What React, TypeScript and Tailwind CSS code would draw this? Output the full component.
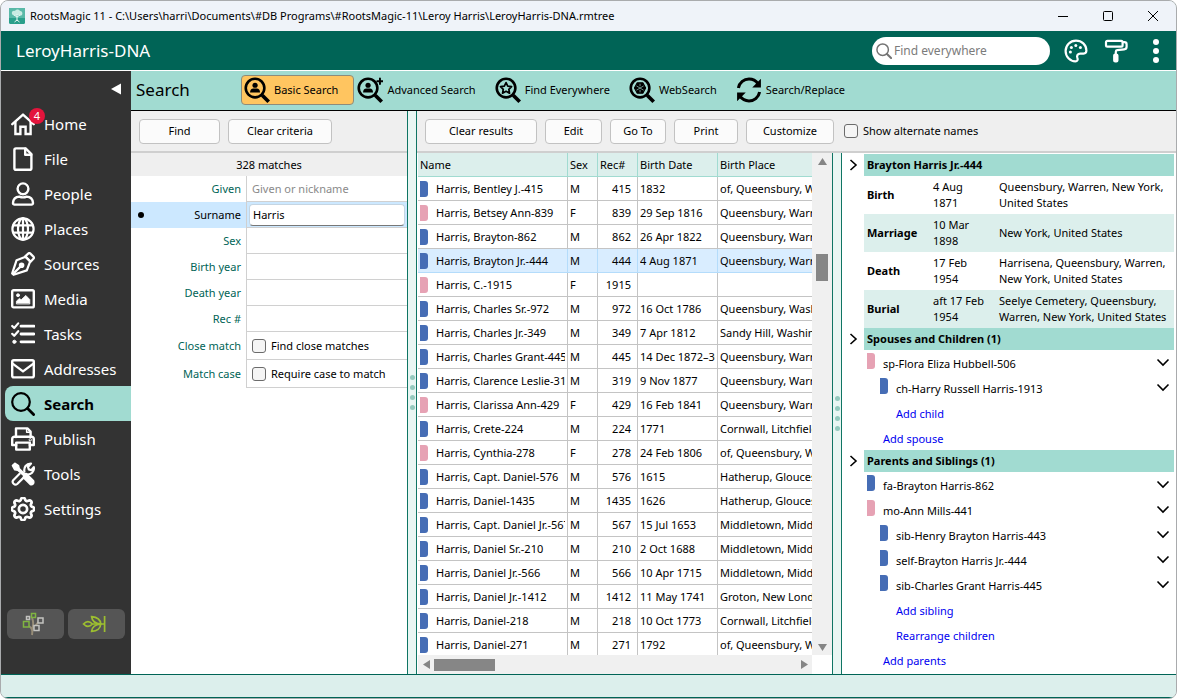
import { useState } from 'react';
import type { ReactNode } from 'react';
import { clsx } from 'clsx';
import { BsGear } from 'react-icons/bs';

type Sex = 'M' | 'F';

interface Person {
  name: string;
  sex: Sex;
  rec: number;
  date: string;
  place: string;
}

const people: Person[] = [
  { name: 'Harris, Bentley J.-415', sex: 'M', rec: 415, date: '1832', place: 'of, Queensbury, Warren' },
  { name: 'Harris, Betsey Ann-839', sex: 'F', rec: 839, date: '29 Sep 1816', place: 'Queensbury, Warren' },
  { name: 'Harris, Brayton-862', sex: 'M', rec: 862, date: '26 Apr 1822', place: 'Queensbury, Warren' },
  { name: 'Harris, Brayton Jr.-444', sex: 'M', rec: 444, date: '4 Aug 1871', place: 'Queensbury, Warren' },
  { name: 'Harris, C.-1915', sex: 'F', rec: 1915, date: '', place: '' },
  { name: 'Harris, Charles Sr.-972', sex: 'M', rec: 972, date: '16 Oct 1786', place: 'Queensbury, Washington' },
  { name: 'Harris, Charles Jr.-349', sex: 'M', rec: 349, date: '7 Apr 1812', place: 'Sandy Hill, Washington' },
  { name: 'Harris, Charles Grant-445', sex: 'M', rec: 445, date: '14 Dec 1872–30', place: 'Queensbury, Warren' },
  { name: 'Harris, Clarence Leslie-319', sex: 'M', rec: 319, date: '9 Nov 1877', place: 'Queensbury, Warren' },
  { name: 'Harris, Clarissa Ann-429', sex: 'F', rec: 429, date: '16 Feb 1841', place: 'Queensbury, Warren' },
  { name: 'Harris, Crete-224', sex: 'M', rec: 224, date: '1771', place: 'Cornwall, Litchfield' },
  { name: 'Harris, Cynthia-278', sex: 'F', rec: 278, date: '24 Feb 1806', place: 'of, Queensbury, Warren' },
  { name: 'Harris, Capt. Daniel-576', sex: 'M', rec: 576, date: '1615', place: 'Hatherup, Gloucester' },
  { name: 'Harris, Daniel-1435', sex: 'M', rec: 1435, date: '1626', place: 'Hatherup, Gloucester' },
  { name: 'Harris, Capt. Daniel Jr.-567', sex: 'M', rec: 567, date: '15 Jul 1653', place: 'Middletown, Middlesex' },
  { name: 'Harris, Daniel Sr.-210', sex: 'M', rec: 210, date: '2 Oct 1688', place: 'Middletown, Middlesex' },
  { name: 'Harris, Daniel Jr.-566', sex: 'M', rec: 566, date: '10 Apr 1715', place: 'Middletown, Middlesex' },
  { name: 'Harris, Daniel Jr.-1412', sex: 'M', rec: 1412, date: '11 May 1741', place: 'Groton, New London' },
  { name: 'Harris, Daniel-218', sex: 'M', rec: 218, date: '10 Oct 1773', place: 'Cornwall, Litchfield' },
  { name: 'Harris, Daniel-271', sex: 'M', rec: 271, date: '1792', place: 'of, Queensbury, Warren' },
];

const facts = [
  { label: 'Birth', date: '4 Aug 1871', place: 'Queensbury, Warren, New York, United States' },
  { label: 'Marriage', date: '10 Mar 1898', place: 'New York, United States' },
  { label: 'Death', date: '17 Feb 1954', place: 'Harrisena, Queensbury, Warren, New York, United States' },
  { label: 'Burial', date: 'aft 17 Feb 1954', place: 'Seelye Cemetery, Queensbury, Warren, New York, United States' },
];

function Icon({ children, className = 'size-6', width = 2.2 }: { children: ReactNode; className?: string; width?: number }) {
  return (
    <svg
      className={clsx('shrink-0', className)}
      viewBox="0 0 24 24"
      fill="none"
      stroke="currentColor"
      strokeWidth={width}
      strokeLinecap="round"
      strokeLinejoin="round"
      aria-hidden="true"
    >
      {children}
    </svg>
  );
}

const navItems: { label: string; icon: ReactNode; badge?: number }[] = [
  {
    label: 'Home',
    badge: 4,
    icon: (
      <Icon width={2.4}>
        <path d="M1.3 12.2L12 2.6l10.7 9.6" />
        <path d="M4.4 10v12h5v-7.2h5.2V22h5V10" strokeLinejoin="miter" />
      </Icon>
    ),
  },
  {
    label: 'File',
    icon: (
      <Icon width={2.4}>
        <path d="M5 1.4h9.6l5.8 5.8v14a1.6 1.6 0 0 1-1.6 1.6H5a1.6 1.6 0 0 1-1.6-1.6V3A1.6 1.6 0 0 1 5 1.4z" />
        <path d="M14.2 1.8v6h6" />
      </Icon>
    ),
  },
  {
    label: 'People',
    icon: (
      <Icon width={2.4}>
        <circle cx="12" cy="6.8" r="5.4" />
        <path d="M8.4 14.6c2.2 1 5 1 7.2 0 3.6.2 6.200 2.600 6.400 6.400a1.500 1.500 0 0 1-1.600 1.600H3.600A1.500 1.500 0 0 1 2 21c.2-3.800 2.800-6.200 6.400-6.400z" />
      </Icon>
    ),
  },
  {
    label: 'Places',
    icon: (
      <Icon>
        <circle cx="12" cy="12" r="10.6" />
        <ellipse cx="12" cy="12" rx="5" ry="10.6" />
        <path d="M2.4 8.4h19.2M2.4 15.6h19.2M12 1.4v21.2" />
      </Icon>
    ),
  },
  {
    label: 'Sources',
    icon: (
      <Icon>
        <path d="M14.6 4.8L5.6 8.2 1.2 21.4l1.4 1.4 13.2-4.4 3.4-9z" />
        <path d="M14.2 4.4l3-2.8a1.6 1.6 0 0 1 2.2 0l3 3a1.6 1.6 0 0 1 0 2.2l-2.8 3z" />
        <path d="M2.4 21.6l7-7" />
        <circle cx="10.6" cy="13.2" r="1.7" fill="currentColor" />
      </Icon>
    ),
  },
  {
    label: 'Media',
    icon: (
      <Icon width={2.4}>
        <rect x="1.2" y="3.2" width="21.6" height="17.2" rx="1.4" />
        <path d="M5.4 16.6v-2.4l3-2.8 1.8 1.4 4.6-4.4 4 4.2v4z" fill="currentColor" strokeWidth="0.8" />
        <circle cx="7" cy="8.2" r="1.5" fill="currentColor" strokeWidth="0.8" />
      </Icon>
    ),
  },
  {
    label: 'Tasks',
    icon: (
      <Icon>
        <path d="M10 4.2h13M10 12h13M10 19.800h13" strokeWidth="2.8" />
        <path d="M1.200 4l2 2 4-4.600M1.200 11.800l2 2 4-4.600" strokeWidth="2.2" />
        <circle cx="3.4" cy="19.8" r="1.6" fill="currentColor" strokeWidth="1" />
      </Icon>
    ),
  },
  {
    label: 'Addresses',
    icon: (
      <Icon width={2.4}>
        <rect x="1.2" y="3.2" width="21.6" height="17.2" rx="1.6" />
        <path d="M1.6 6.6L12 14.4l10.4-7.8" />
      </Icon>
    ),
  },
  {
    label: 'Search',
    icon: (
      <Icon>
        <circle cx="10" cy="10" r="8.8" />
        <path d="M16.6 16.6l6 6" strokeWidth="2.8" />
      </Icon>
    ),
  },
  {
    label: 'Publish',
    icon: (
      <Icon width={2.4}>
        <path d="M5 10V1.4h11.4L19.6 4.6V10" />
        <path d="M5.2 18H1.2v-6a2.2 2.2 0 0 1 2.2-2.2h17.2a2.2 2.2 0 0 1 2.2 2.2v6h-4" />
        <path d="M5.2 15.6h13.6v7H5.2z" />
        <circle cx="19.2" cy="12.8" r="0.4" />
        <path d="M15.6 1.8v3.4h3.6" strokeWidth="1.4" />
      </Icon>
    ),
  },
  {
    label: 'Tools',
    icon: (
      <Icon>
        <path d="M13.4 9.6c-.8-4 1.8-8.2 6.6-8l-3 3.4.8 2.4 2.4.8 2.600-3c.8 4.600-3 7.800-7 7.200L6.200 22c-2.400 2-5.800-1.200-4-3.800l6.400-6.400" />
        <path
          d="M1.4 3.6l2.4-2.4 3.8 2.4.6 2.8 5.4 5.4 1.8-.4 7.2 7.400c1 3-1 4.600-3.400 3.800l-6.800-6.800.2-2.200L7 8.400l-3.400-.6z"
          fill="currentColor"
          strokeWidth="1.4"
        />
      </Icon>
    ),
  },
  {
    label: 'Settings',
    icon: <BsGear className="size-6 shrink-0" strokeWidth={0.8} aria-hidden="true" />,
  },
];

// magnifier frame shared by the search mode buttons
function Magnifier({ children }: { children?: ReactNode }) {
  return (
    <Icon className="size-[26px]" width={2.4}>
      <circle cx="10.2" cy="10.2" r="8.6" />
      <path d="M16.8 16.800l6 6" strokeWidth="3.4" strokeLinecap="butt" />
      {children}
    </Icon>
  );
}

const modes = [
  {
    label: 'Basic Search',
    icon: (
      <Magnifier>
        <circle cx="10.2" cy="7.6" r="2.4" fill="currentColor" stroke="none" />
        <path d="M5.6 14.2c0-2.4 1.2-3.6 3-3.6h3.2c1.8 0 3 1.2 3 3.6z" fill="currentColor" stroke="none" />
      </Magnifier>
    ),
  },
  {
    label: 'Advanced Search',
    icon: (
      <Magnifier>
        <circle cx="10.2" cy="7.6" r="2.4" fill="currentColor" stroke="none" />
        <path d="M5.6 14.2c0-2.4 1.2-3.6 3-3.6h3.2c1.8 0 3 1.2 3 3.6z" fill="currentColor" stroke="none" />
        <path d="M21.2 1.4v5M18.700 3.900h5" strokeWidth="1.8" />
      </Magnifier>
    ),
  },
  {
    label: 'Find Everywhere',
    icon: (
      <Magnifier>
        <path d="M10.2 5.2l1.6 3.2 3.500.5-2.500 2.500.6 3.500-3.200-1.700L7 14.900l.6-3.500-2.500-2.500 3.500-.5z" strokeWidth="1.6" />
      </Magnifier>
    ),
  },
  {
    label: 'WebSearch',
    icon: (
      <Magnifier>
        <path
          d="M7.6 5.400h5.200l2.600 4.800-2.600 4.800H7.600L5 10.200z"
          fill="currentColor"
          strokeWidth="1"
        />
        <path d="M7.200 8.400l6 3.600M13.200 8.400l-6 3.600M10.200 6.600v1.600M10.200 12.200v1.600" stroke="#a1dbd1" strokeWidth="0.6" />
      </Magnifier>
    ),
  },
  {
    label: 'Search/Replace',
    icon: (
      <Icon className="size-[26px]" width={2.8}>
        <path d="M2.2 10.2C3.2 5 7.4 1.9 12 1.9c3.6 0 6.4 1.600 8.400 4.400" strokeLinecap="butt" />
        <path d="M21.8 13.8c-1 5.2-5.2 8.3-9.8 8.3-3.6 0-6.400-1.600-8.400-4.400" strokeLinecap="butt" />
        <path d="M23 1.6v8h-8zM1 22.4v-8h8z" fill="currentColor" stroke="none" />
      </Icon>
    ),
  },
];

function Swatch({ sex }: { sex: Sex }) {
  return <span className={clsx('block h-4 w-2 shrink-0 rounded-r-[3px]', sex === 'M' ? 'bg-[#466db5]' : 'bg-[#e6a2b4]')} />;
}

function PushButton({ children, className }: { children: ReactNode; className?: string }) {
  return (
    <button type="button" className={clsx('h-[25px] shrink-0 rounded border border-[#c2c2c2] bg-[#fbfbfb] text-center', className)}>
      {children}
    </button>
  );
}

function Splitter() {
  return (
    <div role="separator" className="flex w-[10px] shrink-0 flex-col items-center justify-center gap-[5px] border-x border-[#0f7564] bg-[#e9f6f3]">
      {[0, 1, 2, 3].map((i) => (
        <span key={i} className="size-[5px] rounded-full bg-[#94c9be]" />
      ))}
    </div>
  );
}

function TitleBar() {
  return (
    <header className="flex h-[30px] shrink-0 items-center bg-[#eff3f9] pl-2">
      <svg className="size-4" viewBox="0 0 16 16" aria-hidden="true">
        <rect width="16" height="16" rx="1.5" fill="#2a9f8b" />
        <path d="M0 0h16v10H0z" fill="#59b9a8" />
        <path d="M3 6c-1-3 2-4 3-3 1-2 4-2 5 0 2 0 3 2 2 4-1 1-3 1-4 0-2 1-5 1-6-1z" fill="#c9ebe3" />
        <path d="M8 6v7M8 9L5 7M8 9l3-2M5.5 14L8 12l2.500 2" stroke="#e9f8f4" fill="none" />
      </svg>
      <h1 className="ml-[5px] flex-1 truncate">
        RootsMagic 11 - C:\Users\harri\Documents\#DB Programs\#RootsMagic-11\Leroy Harris\LeroyHarris-DNA.rmtree
      </h1>
      <div className="flex h-full">
        <button type="button" aria-label="Minimize" className="grid w-[45px] place-items-center">
          <svg width="12" height="12"><path d="M1 6.5h10" stroke="#000" /></svg>
        </button>
        <button type="button" aria-label="Maximize" className="grid w-[45px] place-items-center">
          <svg width="12" height="12"><rect x="1.5" y="1.5" width="9" height="9" rx="1" fill="none" stroke="#000" /></svg>
        </button>
        <button type="button" aria-label="Close" className="grid w-[46px] place-items-center">
          <svg width="12" height="12"><path d="M1 1l10 10M11 1L1 11" stroke="#000" /></svg>
        </button>
      </div>
    </header>
  );
}

function FileBar() {
  return (
    <div className="flex h-10 shrink-0 items-center border-b border-white bg-[#006456] pl-[15px] text-white">
      <h2 className="flex-1 text-[17px]">LeroyHarris-DNA</h2>
      <label className="flex h-7 w-[178px] items-center gap-[2px] rounded-full bg-white pl-1 text-[#737373]">
        <Icon className="size-4" width={2.2}>
          <circle cx="10" cy="10" r="8.6" />
          <path d="M16.4 16.4l6.2 6.2" strokeWidth="3" />
        </Icon>
        <input
          type="search"
          aria-label="Find everywhere"
          placeholder="Find everywhere"
          className="min-w-0 flex-1 bg-transparent text-xs text-black outline-none placeholder:text-[#7b7b7b]"
        />
      </label>
      <button type="button" aria-label="Theme" className="ml-[14px]">
        <Icon>
          <path d="M12 1.6C6 1.600 1.600 6.400 1.600 12S6 22.400 11.400 22.400c2 0 2.800-1.800 2-3.400-1-2.400.4-4.400 2.800-4.400h3.400c1.800 0 2.800-1.200 2.800-3C22.400 5.600 17.600 1.600 12 1.600z" />
          <g fill="currentColor" stroke="none">
            <circle cx="6.4" cy="13" r="1.5" />
            <circle cx="7.4" cy="8.6" r="1.5" />
            <circle cx="11.8" cy="6.4" r="1.5" />
            <circle cx="16.4" cy="8.6" r="1.5" />
          </g>
        </Icon>
      </button>
      <button type="button" aria-label="Format" className="ml-4">
        <Icon>
          <rect x="2" y="1.8" width="16.6" height="5.8" rx="1.4" />
          <path d="M18.8 3.2h1.6a2.200 2.200 0 0 1 2.200 2.200v2.400a2.600 2.600 0 0 1-2.400 2.600l-7 .8c-1 .1-1.400.8-1.400 1.600V15" />
          <rect x="10.2" y="15.6" width="3.2" height="6.8" rx="1" fill="currentColor" />
        </Icon>
      </button>
      <button type="button" aria-label="More options" className="mr-2 ml-4">
        <svg className="size-6" viewBox="0 0 24 24" fill="currentColor" aria-hidden="true">
          <circle cx="12" cy="3" r="3" />
          <circle cx="12" cy="12" r="3" />
          <circle cx="12" cy="21" r="3" />
        </svg>
      </button>
    </div>
  );
}

function Sidebar() {
  return (
    <nav className="flex w-[130px] shrink-0 flex-col bg-[#333333] text-[15px] text-white">
      <div className="flex h-[35px] items-center justify-end pr-[10px]">
        <button type="button" aria-label="Collapse">
          <svg width="10" height="12" viewBox="0 0 10 12"><path d="M10 0.5v11L0 6z" fill="#fff" /></svg>
        </button>
      </div>
      {navItems.map(({ label, icon, badge }) => (
        <a
          key={label}
          href={`#${label.toLowerCase()}`}
          className={clsx(
            'relative ml-1 flex h-[35px] items-center gap-[9px] pl-[6px]',
            label === 'Search' && 'rounded-l-lg bg-[#a1dbd1] font-bold text-black',
          )}
        >
          {icon}
          {badge && (
            <span className="absolute top-[2px] left-6 grid size-4 place-items-center rounded-full bg-[#e3143c] text-[11px]">
              {badge}
            </span>
          )}
          {label}
        </a>
      ))}
      <div className="mt-auto mb-[35px] flex gap-1 px-[6px]">
        <button type="button" aria-label="FamilySearch" className="flex h-[30px] flex-1 items-center rounded-md bg-[#555555] pl-[14px]">
          <svg className="size-6" viewBox="0 0 24 24" fill="none" strokeWidth="1.5" aria-hidden="true">
            <path d="M11 23c1-4 0-7-3-9M11 18c1-3 2-8 0-12M12 17l6-8" stroke="#968c77" strokeWidth="2" />
            <path d="M10.5 1.500h4v4h-4zM2.500 9.500h5.500v5.500H2.500z" stroke="#7fb441" fill="#555" />
            <path d="M5.5 4.500h3v3h-3zM17 6h5v5h-5zM13 13.500h5v5h-5z" stroke="#c3c3c0" fill="#555" />
          </svg>
        </button>
        <button type="button" aria-label="Ancestry" className="flex h-[30px] flex-1 items-center rounded-md bg-[#555555] pl-[14px]">
          <svg className="size-6" viewBox="0 0 24 24" fill="none" stroke="#9cbe30" strokeWidth="1.7" aria-hidden="true">
            <path d="M22.6 4v16M10 12h12.600M1.500 12c3-3.200 5.800-3.200 9 0-3.200 3.200-6 3.200-9 0z" />
            <path d="M18.8 12C12 11.500 10 8.500 9.600 4.600c5.400.4 8.800 2.400 9.200 7.400zM18.800 12c-6.800.5-8.800 3.500-9.200 7.400 5.400-.4 8.800-2.400 9.200-7.400z" />
          </svg>
        </button>
      </div>
    </nav>
  );
}

function CriteriaRow({ label, id, active, tall, children }: { label: string; id: string; active?: boolean; tall?: boolean; children: ReactNode }) {
  return (
    <div className={clsx('flex', tall ? 'h-7' : 'h-[26px]', active && 'bg-[#cce8ff]')}>
      <label htmlFor={id} className={clsx('flex w-[115px] shrink-0 items-center pr-[5px] pl-[7px]', active ? 'text-black' : 'text-[#006456]')}>
        {active && <span className="size-[6px] rounded-full bg-black" />}
        <span className="ml-auto">{label}</span>
      </label>
      <div className="flex min-w-0 flex-1 items-center border-b border-l border-[#d0d0d0]">{children}</div>
    </div>
  );
}

const textClass = 'h-full w-full min-w-0 bg-transparent px-[5px] outline-none placeholder:text-[#8a8a8a]';
const boxClass = 'size-[14px] shrink-0 appearance-none rounded-[3px] border border-[#6b6b6b] bg-[#f5f5f5]';

function CriteriaPanel() {
  const [surname, setSurname] = useState('Harris');

  return (
    <section className="flex w-[276px] shrink-0 flex-col bg-white">
      <div className="flex h-[42px] shrink-0 items-center gap-2 border-b-2 border-[#cfcfcf] bg-[#efefef] px-2">
        <PushButton className="w-[81px]">Find</PushButton>
        <PushButton className="w-[104px]">Clear criteria</PushButton>
      </div>
      <p className="flex h-[23px] shrink-0 items-center justify-center bg-[#efefef]">328 matches</p>
      <form onSubmit={(e) => e.preventDefault()}>
        <CriteriaRow label="Given" id="given">
          <input id="given" placeholder="Given or nickname" className={textClass} />
        </CriteriaRow>
        <CriteriaRow label="Surname" id="surname" active>
          <input
            id="surname"
            value={surname}
            onChange={(e) => setSurname(e.target.value)}
            className="mx-[2px] h-[22px] min-w-0 flex-1 rounded-sm border border-b-[#777777] border-[#c5d5e2] bg-white px-[3px] outline-none"
          />
        </CriteriaRow>
        <CriteriaRow label="Sex" id="sex">
          <input id="sex" className={textClass} />
        </CriteriaRow>
        <CriteriaRow label="Birth year" id="birth-year">
          <input id="birth-year" className={textClass} />
        </CriteriaRow>
        <CriteriaRow label="Death year" id="death-year">
          <input id="death-year" className={textClass} />
        </CriteriaRow>
        <CriteriaRow label="Rec #" id="rec">
          <input id="rec" className={textClass} />
        </CriteriaRow>
        <CriteriaRow label="Close match" id="close-match" tall>
          <label className="flex items-center gap-[5px] pl-[5px]">
            <input id="close-match" type="checkbox" className={boxClass} />
            Find close matches
          </label>
        </CriteriaRow>
        <CriteriaRow label="Match case" id="match-case" tall>
          <label className="flex items-center gap-[5px] pl-[5px]">
            <input id="match-case" type="checkbox" className={boxClass} />
            Require case to match
          </label>
        </CriteriaRow>
      </form>
    </section>
  );
}

function Arrow({ label, className }: { label: string; className?: string }) {
  return (
    <button type="button" aria-label={label} className="grid size-4 shrink-0 place-items-center">
      <svg className={className} width="9" height="7" viewBox="0 0 9 7"><path d="M4.5 0L9 7H0z" fill="#858585" /></svg>
    </button>
  );
}

function ResultsTable() {
  const [selected, setSelected] = useState(444);
  const cell = 'border-b border-l p-0 px-[2px] whitespace-nowrap';

  return (
    <div className="flex min-w-0 flex-1 flex-col bg-white pl-px">
      <div className="flex min-h-0 flex-1">
        <div className="min-w-0 flex-1 overflow-hidden">
          <table className="w-full table-fixed border-separate border-spacing-0 text-left">
            <colgroup>
              <col className="w-[149px]" />
              <col className="w-[30px]" />
              <col className="w-10" />
              <col className="w-20" />
              <col />
            </colgroup>
            <thead>
              <tr className="h-6 bg-[#dcefec]">
                {['Name', 'Sex', 'Rec#', 'Birth Date', 'Birth Place'].map((title) => (
                  <th key={title} scope="col" className={clsx(cell, 'border-[#a1dbd1] font-normal first:border-l-0')}>
                    {title}
                  </th>
                ))}
              </tr>
            </thead>
            <tbody>
              {people.map((p) => {
                const on = p.rec === selected;
                const line = clsx(cell, on ? 'border-[#b4dcfb]' : 'border-[#c4c4c4]');
                return (
                  <tr key={p.rec} onClick={() => setSelected(p.rec)} className={clsx('h-6', on && 'bg-[#d9edff]')}>
                    <td className={clsx(line, 'border-l-0')}>
                      <div className="flex items-center gap-2">
                        <Swatch sex={p.sex} />
                        <span className="min-w-0 flex-1 overflow-hidden">{p.name}</span>
                      </div>
                    </td>
                    <td className={line}>{p.sex}</td>
                    <td className={clsx(line, 'pr-[6px] text-right')}>{p.rec}</td>
                    <td className={line}>
                      <div className="overflow-hidden">{p.date}</div>
                    </td>
                    <td className={clsx(line, 'pr-0')}>
                      <div className="overflow-hidden">{p.place}</div>
                    </td>
                  </tr>
                );
              })}
            </tbody>
          </table>
        </div>
        <div className="flex w-5 shrink-0 flex-col items-center bg-[#f0f0f0]">
          <Arrow label="Scroll up" />
          <div className="flex w-3 flex-1 flex-col">
            <span className="basis-[18%]" />
            <span className="h-[27px] bg-[#868686]" />
          </div>
          <Arrow label="Scroll down" className="rotate-180" />
        </div>
      </div>
      <div className="mr-5 flex h-[19px] shrink-0 items-center bg-[#f0f0f0]">
        <Arrow label="Scroll left" className="-rotate-90" />
        <div className="flex-1">
          <span className="block h-3 w-[61px] bg-[#868686]" />
        </div>
        <Arrow label="Scroll right" className="rotate-90" />
      </div>
    </div>
  );
}

function SectionHead({ children }: { children: ReactNode }) {
  return (
    <h3 className="flex h-[22px] items-center font-bold">
      <button type="button" aria-label="Expand section" className="flex w-[22px] shrink-0 justify-center">
        <svg width="9" height="12" viewBox="0 0 9 12" fill="none" stroke="#000" strokeWidth="1.6"><path d="M1.5 1L7 6l-5.500 5" /></svg>
      </button>
      <span className="flex h-full flex-1 items-center bg-[#a1dbd1] pl-[3px]">{children}</span>
    </h3>
  );
}

function Relative({ sex, child, children }: { sex: Sex; child?: boolean; children: ReactNode }) {
  return (
    <li className={clsx('flex h-[25px] items-start pr-1', child ? 'pl-[38px]' : 'pl-[25px]')}>
      <span className="pt-[3px]"><Swatch sex={sex} /></span>
      <span className="flex-1 pt-[6px] pl-2">{children}</span>
      <button type="button" aria-label="Options" className="pt-2">
        <svg width="14" height="9" viewBox="0 0 14 9" fill="none" stroke="#000" strokeWidth="1.6"><path d="M1.5 1.500L7 7l5.500-5.500" /></svg>
      </button>
    </li>
  );
}

function AddLink({ child, children }: { child?: boolean; children: ReactNode }) {
  return (
    <li className={clsx('h-[25px] pt-[6px]', child ? 'pl-[54px]' : 'pl-[41px]')}>
      <a href="#edit" className="text-[#0000f0]">{children}</a>
    </li>
  );
}

function DetailsPanel() {
  return (
    <aside className="w-[334px] shrink-0 overflow-hidden bg-white pt-px pr-[2px] leading-4">
      <SectionHead>Brayton Harris Jr.-444</SectionHead>
      <div className="pl-[22px]">
        <table className="w-full table-fixed text-left">
          <colgroup>
            <col className="w-[67px]" />
            <col className="w-[66px]" />
            <col />
          </colgroup>
          <tbody>
            {facts.map((f) => (
              <tr key={f.label} className="h-[38px] even:bg-[#dcefec]">
                <th scope="row" className="pl-[3px] font-bold">{f.label}</th>
                <td className="pr-2 pl-[2px]">{f.date}</td>
                <td className="pl-[2px]">{f.place}</td>
              </tr>
            ))}
          </tbody>
        </table>
      </div>
      <SectionHead>Spouses and Children (1)</SectionHead>
      <ul>
        <Relative sex="F">sp-Flora Eliza Hubbell-506</Relative>
        <Relative sex="M" child>ch-Harry Russell Harris-1913</Relative>
        <AddLink child>Add child</AddLink>
        <AddLink>Add spouse</AddLink>
      </ul>
      <SectionHead>Parents and Siblings (1)</SectionHead>
      <ul>
        <Relative sex="M">fa-Brayton Harris-862</Relative>
        <Relative sex="F">mo-Ann Mills-441</Relative>
        <Relative sex="M" child>sib-Henry Brayton Harris-443</Relative>
        <Relative sex="M" child>self-Brayton Harris Jr.-444</Relative>
        <Relative sex="M" child>sib-Charles Grant Harris-445</Relative>
        <AddLink child>Add sibling</AddLink>
        <AddLink child>Rearrange children</AddLink>
        <AddLink>Add parents</AddLink>
      </ul>
    </aside>
  );
}

export default function App() {
  return (
    <div className="flex h-screen flex-col overflow-hidden rounded-lg border border-[#a9abad] bg-[#dcefec] font-['Noto_Sans',sans-serif] text-[11px] leading-4 text-black">
      <TitleBar />
      <FileBar />
      <div className="flex min-h-0 flex-1">
        <Sidebar />
        <main className="flex min-w-0 flex-1 flex-col">
          <div className="flex h-10 shrink-0 items-center border-b border-black bg-[#a1dbd1] pb-px pl-[5px]">
            <h2 className="w-[105px] text-[17px]">Search</h2>
            {modes.map(({ label, icon }, i) => (
              <button
                key={label}
                type="button"
                className={clsx(
                  'flex h-[30px] items-center gap-1 rounded border pr-[15px] pl-[2px] whitespace-nowrap',
                  i === 0 ? 'border-[#8c8c7c] bg-[#ffc560]' : 'border-transparent',
                )}
              >
                {icon}
                {label}
              </button>
            ))}
          </div>
          <div className="flex min-h-0 flex-1">
            <CriteriaPanel />
            <Splitter />
            <section className="flex min-w-0 flex-1 flex-col">
              <div className="flex h-[42px] shrink-0 items-center gap-2 border-b-2 border-[#cfcfcf] bg-[#efefef] px-2">
                <PushButton className="w-28">Clear results</PushButton>
                <PushButton className="w-[57px]">Edit</PushButton>
                <PushButton className="w-[56px]">Go To</PushButton>
                <PushButton className="w-16">Print</PushButton>
                <PushButton className="w-[88px]">Customize</PushButton>
                <label className="ml-[2px] flex items-center gap-[5px]">
                  <input type="checkbox" className={boxClass} />
                  Show alternate names
                </label>
              </div>
              <div className="flex min-h-0 flex-1">
                <ResultsTable />
                <Splitter />
                <DetailsPanel />
              </div>
            </section>
          </div>
        </main>
      </div>
      <footer className="h-6 shrink-0 border-y border-[#006456] bg-[#dcefec]" />
    </div>
  );
}
